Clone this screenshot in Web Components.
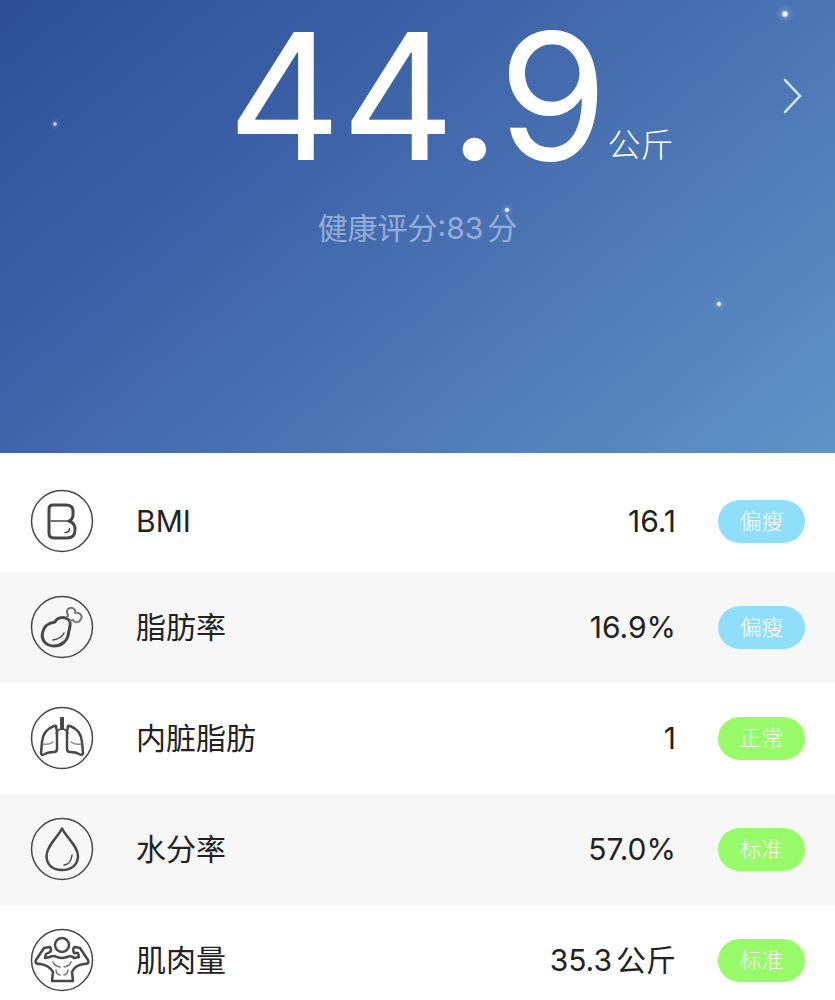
<!DOCTYPE html>
<html lang="zh-CN">
<head>
<meta charset="utf-8">
<meta name="viewport" content="width=device-width, initial-scale=1">
<title>健康评分</title>
<style>
  body {
    margin: 0;
    background: #fff;
    color: #222;
    font-family: Inter, "Noto Sans CJK SC", sans-serif;
  }
</style>
</head>
<body>
<health-report>
  <weight-hero slot="hero" value="44.9" unit="公斤" score="83"></weight-hero>
  <metric-row icon="bmi" value="16.1" status="偏瘦" level="low">BMI</metric-row>
  <metric-row icon="fat" value="16.9%" status="偏瘦" level="low">脂肪率</metric-row>
  <metric-row icon="lungs" value="1" status="正常" level="ok">内脏脂肪</metric-row>
  <metric-row icon="water" value="57.0%" status="标准" level="ok">水分率</metric-row>
  <metric-row icon="muscle" value="35.3" unit="公斤" status="标准" level="ok">肌肉量</metric-row>
</health-report>

<script>
(function() {

  // Line icons, all drawn inside the same 64x64 ring
  const ICONS = {
    bmi: `
      <path stroke-width="3" d="M23 16H36Q43 16 43 22V26Q43 30 39 32Q45 34 45 40V41Q45 49 37 49H24Q19 49 19 44V20Q19 16 23 16Z"/>
      <path stroke-width="1.500" d="M21 32H39M39.500 39.500Q39.500 43.500 35 43.500"/>`,
    fat: `
      <path stroke-width="3" d="M25 27C27 22 35 21 39 25C42 29 39 34 38.500 38C38 46 31 51 24 51C16 51 11 45 12.500 38C14 30 19 28 25 27Z"/>
      <path stroke-width="1.500" d="M34 38Q31 44 23 45"/>
      <path stroke-width="2" stroke="#777" d="M37 22Q39 20 37 18C36 14 41 11 44 14Q46 16 45 18C50 17 53 21 51 24C49 28 45 28 43 25Q42 25 40 26"/>`,
    lungs: `
      <path stroke-width="4" stroke-linecap="butt" d="M32 11V24"/>
      <path stroke-width="1.500" d="M26 27Q28 23 32 23Q36 23 38 27"/>
      <path stroke-width="2.500" d="M26 21Q27 19 24 20Q13 24 12 36L11 47Q11 50 15 48Q18 46 24 46Q27 46 27 43V25ZM38 21Q37 19 40 20Q51 24 52 36L53 47Q53 50 49 48Q46 46 40 46Q37 46 37 43V25Z"/>
      <path stroke-width="1.500" stroke="#888" d="M13 38Q20 39 23 36M51 38Q44 39 41 36"/>`,
    water: `
      <path stroke-width="2.500" d="M32 11.500C28 20 16.500 29 16.500 39C16.500 48 23 53 32 53C41 53 48 48 48 39C48 29 36 20 32 11.500Z"/>
      <path stroke-width="1.500" d="M42 38Q41 47 34 48"/>`,
    muscle: `
      <circle stroke-width="2.500" cx="32" cy="17" r="7"/>
      <path stroke-width="2.500" d="M20 29Q23 27 27 29Q32 31 37 29Q41 27 44 30L49 29L48 25L44 25Q42 20 45 19L50 20L58 32Q60 36 54 36Q45 37 42 44L43 53H22L23 44Q19 37 10 36Q4 36 6 32L14 20L20 19Q22 22 20 24L16 26L15 30Z"/>
      <path stroke-width="1.500" stroke="#777" d="M23 34Q24 38 30 39M41 34Q40 38 34 39M26 42Q26 46 30 47M38 42Q38 46 34 47"/>`
  };

  class HealthReport extends HTMLElement {
    constructor() {
      super();
      this.attachShadow({ mode: 'open' });
      this.shadowRoot.innerHTML = `
        <style>
          :host {
            display: block;
          }
          .list {
            display: flex;
            flex-direction: column;
            padding-top: 18px;
          }
          ::slotted(metric-row:nth-of-type(odd)) {
            background: #fff;
          }
          ::slotted(metric-row:nth-of-type(even)) {
            background: #f7f7f8;
          }
          ::slotted(metric-row:first-of-type) {
            min-height: 101px;
          }
        </style>
        <slot name="hero"></slot>
        <div class="list" role="list"><slot></slot></div>
      `;
    }
  }

  class WeightHero extends HTMLElement {
    constructor() {
      super();
      this.attachShadow({ mode: 'open' });
    }

    connectedCallback() {
      this.shadowRoot.innerHTML = `
        <style>
          :host {
            display: block;
            position: relative;
            box-sizing: border-box;
            min-height: 453px;
            color: #fff;
            background: linear-gradient(140deg, #2e4f97 0%, #3a5ea5 28%, #4a73b2 58%, #6093c6 100%);
          }
          .sky {
            position: absolute;
            inset: 0;
            width: 100%;
            height: 100%;
          }
          .content {
            position: relative;
            display: grid;
            grid-template-columns: 84px 1fr 84px;
            align-items: center;
          }
          .weight {
            grid-column: 2;
            display: flex;
            justify-content: center;
            align-items: flex-end;
            margin-left: 66px;
            white-space: nowrap;
          }
          .value {
            font-size: 176px;
            line-height: 192px;
          }
          .unit {
            margin-bottom: 27px;
            font-size: 33px;
            line-height: 40px;
            font-weight: 300;
          }
          .more {
            display: flex;
            justify-self: center;
            padding: 8px;
            border: 0;
            background: none;
            color: #d8e8fc;
            cursor: pointer;
          }
          .score {
            position: relative;
            display: flex;
            justify-content: center;
            gap: 4px;
            margin: 12px 0 0;
            font-size: 30px;
            line-height: 48px;
            color: #93afd9;
          }
        </style>
        <svg class="sky" viewBox="0 0 835 453" preserveAspectRatio="none" aria-hidden="true">
          <defs>
            <radialGradient id="glow">
              <stop offset="0" stop-color="#fff"/>
              <stop offset=".2" stop-color="#e4f0ff"/>
              <stop offset=".4" stop-color="#a9caf2" stop-opacity=".2"/>
              <stop offset="1" stop-color="#a9caf2" stop-opacity="0"/>
            </radialGradient>
          </defs>
          <g fill="url(#glow)">
            <circle cx="785" cy="14" r="10"/>
            <circle cx="55" cy="124" r="6" opacity=".8"/>
            <circle cx="507" cy="210" r="7"/>
            <circle cx="719" cy="304" r="7"/>
          </g>
        </svg>
        <div class="content">
          <div class="weight">
            <span class="value">${this.getAttribute('value')}</span>
            <span class="unit">${this.getAttribute('unit')}</span>
          </div>
          <button class="more" type="button" aria-label="详情">
            <svg width="20" height="36" viewBox="0 0 20 36" fill="none" stroke="currentColor" stroke-width="2.500" stroke-linecap="round"><path d="M2 2L17 18L2 34"/></svg>
          </button>
        </div>
        <p class="score"><span>健康评分:${this.getAttribute('score')}</span><span>分</span></p>
      `;
    }
  }

  class MetricRow extends HTMLElement {
    constructor() {
      super();
      this.attachShadow({ mode: 'open' });
    }

    connectedCallback() {
      const unit = this.getAttribute('unit');
      this.setAttribute('role', 'listitem');
      this.shadowRoot.innerHTML = `
        <style>
          :host {
            display: grid;
            grid-template-columns: 64px 1fr auto 87px;
            align-items: center;
            box-sizing: border-box;
            min-height: 111px;
            padding: 0 30px 1px;
            font-size: 30px;
            line-height: 40px;
          }
          .icon {
            width: 64px;
            height: 64px;
          }
          .label {
            margin-left: 42px;
          }
          .value {
            display: flex;
            gap: 4px;
            margin-right: 42px;
          }
          .badge {
            border-radius: 22px;
            text-align: center;
            font-size: 22px;
            line-height: 43px;
            font-weight: 300;
            color: #fff;
          }
          .low {
            background: #8fdffb;
          }
          .ok {
            background: #98fb6a;
          }
        </style>
        <svg class="icon" viewBox="0 0 64 64" fill="none" stroke="#484848" stroke-linecap="round" stroke-linejoin="round" aria-hidden="true">
          <circle cx="32" cy="32" r="30.500" stroke-width="1.500"/>
          ${ICONS[this.getAttribute('icon')]}
        </svg>
        <span class="label"><slot></slot></span>
        <span class="value"><span>${this.getAttribute('value')}</span>${unit ? `<span>${unit}</span>` : ''}</span>
        <span class="badge ${this.getAttribute('level')}">${this.getAttribute('status')}</span>
      `;
    }
  }

  customElements.define('health-report', HealthReport);
  customElements.define('weight-hero', WeightHero);
  customElements.define('metric-row', MetricRow);

})();
</script>
</body>
</html>
